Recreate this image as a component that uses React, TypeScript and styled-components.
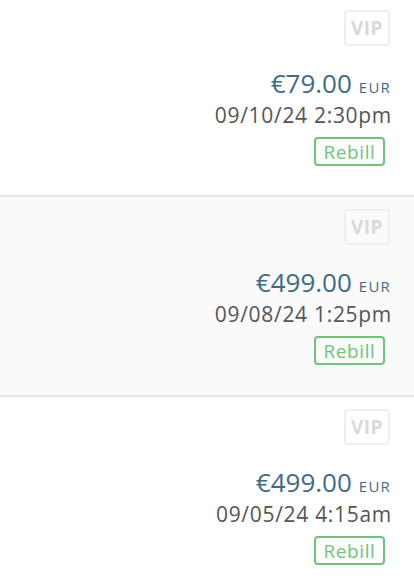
import styled, { createGlobalStyle } from "styled-components";

const GlobalStyle = createGlobalStyle`
  html, body {
    margin: 0;
    padding: 0;
    background: #ffffff;
    font-family: "Open Sans", Lato, sans-serif;
  }
`;

const List = styled.div`
  display: flex;
  flex-direction: column;
`;

const Row = styled.div<{ $shaded?: boolean; $first?: boolean }>`
  display: flex;
  flex-direction: column;
  align-items: flex-end;
  height: ${(p) => (p.$first ? 197 : 200)}px;
  box-sizing: border-box;
  padding: ${(p) => (p.$first ? 10 : 12)}px 23px 0 0;
  background: ${(p) => (p.$shaded ? "#fafafa" : "#ffffff")};
  border-bottom: 2px solid #e6e6e6;
`;

const VipTag = styled.div`
  width: 46px;
  height: 36px;
  box-sizing: border-box;
  border: 2px solid #efefef;
  border-radius: 4px;
  display: flex;
  align-items: center;
  justify-content: center;
  color: #d9d9d9;
  font-weight: 700;
  font-size: 19px;
  letter-spacing: 0.5px;
  margin-right: 1px;
`;

const Price = styled.div`
  margin-top: 22px;
  color: #3e6c84;
  font-size: 26px;
  line-height: 30px;
  white-space: nowrap;
`;

const Currency = styled.span`
  font-size: 15px;
  letter-spacing: 1.2px;
  margin-left: 7px;
`;

const DateText = styled.div`
  color: #555555;
  font-size: 21px;
  line-height: 27px;
  letter-spacing: 0.7px;
  margin-right: -1px;
  white-space: nowrap;
`;

const RebillTag = styled.div`
  margin-top: 8px;
  margin-right: 6px;
  width: 71px;
  height: 29px;
  box-sizing: border-box;
  border: 2px solid #72c27d;
  border-radius: 4px;
  display: flex;
  align-items: center;
  justify-content: center;
  color: #72c27d;
  font-size: 19px;
  letter-spacing: 0.6px;
`;

const orders = [
  { amount: "€79.00", date: "09/10/24 2:30pm" },
  { amount: "€499.00", date: "09/08/24 1:25pm" },
  { amount: "€499.00", date: "09/05/24 4:15am" },
];

const App = () => {
  return (
    <>
      <GlobalStyle />
      <List>
        {orders.map((o, i) => (
          <Row key={i} $first={i === 0} $shaded={i === 1}>
            <VipTag>VIP</VipTag>
            <Price>
              {o.amount}
              <Currency>EUR</Currency>
            </Price>
            <DateText>{o.date}</DateText>
            <RebillTag>Rebill</RebillTag>
          </Row>
        ))}
      </List>
    </>
  );
};

export default App;
